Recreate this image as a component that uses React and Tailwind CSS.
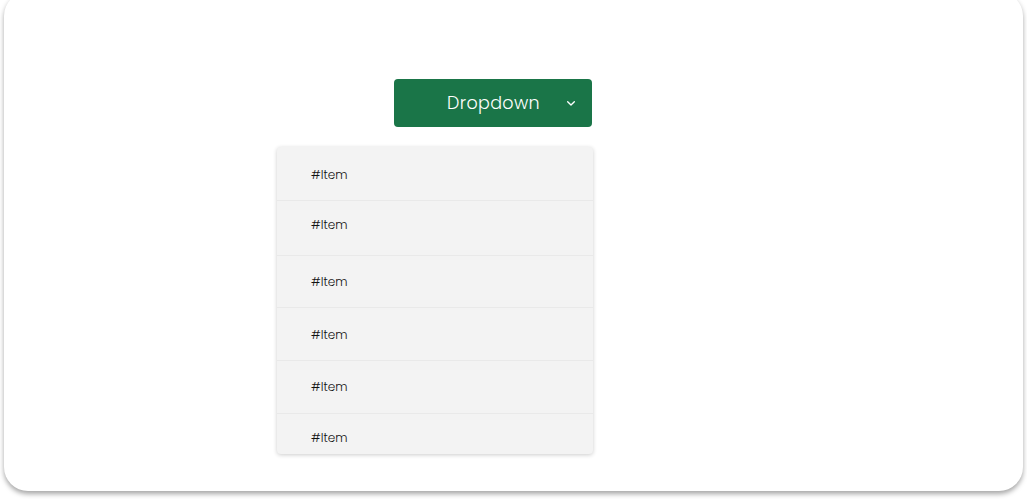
import React from "react";

const items = [
  { h: "h-[54px]", pt: "pt-[19px]" },
  { h: "h-[55px]", pt: "pt-[15px]" },
  { h: "h-[52px]", pt: "pt-[17px]" },
  { h: "h-[53px]", pt: "pt-[18px]" },
  { h: "h-[53px]", pt: "pt-[17px]" },
  { h: "h-[40px]", pt: "pt-[15px]" },
];

export default function App() {
  return (
    <div className="w-[1027px] h-[499px] bg-white overflow-hidden" style={{ fontFamily: "Poppins, Inter, 'Noto Sans', sans-serif" }}>
      <div className="mx-[4px] -mt-[8px] h-[499px] rounded-[24px] bg-white shadow-[0_3px_5px_rgba(0,0,0,0.35)]">
        <div className="ml-[273px] w-[316px] pt-[87px] flex flex-col items-end">
          <button className="mr-[1px] w-[198px] h-[48px] rounded-[4px] bg-[#1a7548] text-white flex items-center pl-[53px] pr-[13px]">
            <span className="text-[17.5px] leading-[26px] font-light tracking-[0.35px] flex-1 text-left">Dropdown</span>
            <svg width="16" height="16" viewBox="0 0 24 24" fill="none" stroke="white" strokeWidth="2" strokeLinecap="round" strokeLinejoin="round">
              <path d="M7 10l5 5 5-5" />
            </svg>
          </button>
          <div className="mt-[20px] w-[316px] bg-[#f3f3f3] rounded-[4px] shadow-[0_1px_4px_rgba(0,0,0,0.2)] flex flex-col">
            {items.map((it, i) => (
              <div
                key={i}
                className={`${it.h} ${it.pt} pl-[34px] text-[12px] leading-[18px] font-light text-[#111] ${i < items.length - 1 ? "border-b border-[#e9e9e9]" : ""}`}
              >
                #Item
              </div>
            ))}
          </div>
        </div>
      </div>
    </div>
  );
}
